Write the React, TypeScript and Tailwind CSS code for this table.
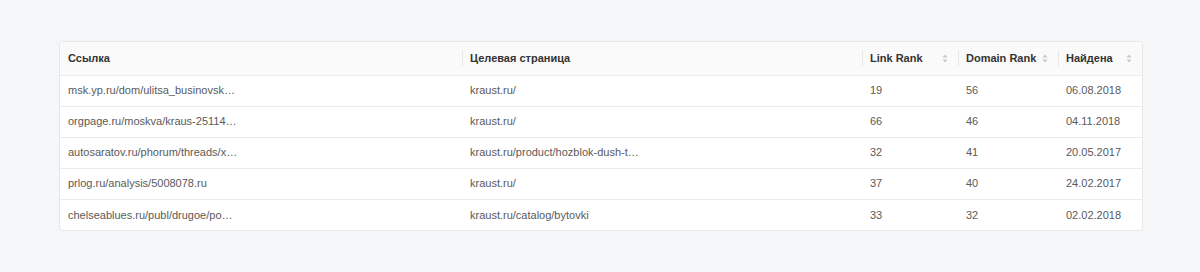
const ROWS = [
  { link: "msk.yp.ru/dom/ulitsa_businovsk…", target: "kraust.ru/", linkRank: 19, domainRank: 56, found: "06.08.2018" },
  { link: "orgpage.ru/moskva/kraus-25114…", target: "kraust.ru/", linkRank: 66, domainRank: 46, found: "04.11.2018" },
  { link: "autosaratov.ru/phorum/threads/x…", target: "kraust.ru/product/hozblok-dush-t…", linkRank: 32, domainRank: 41, found: "20.05.2017" },
  { link: "prlog.ru/analysis/5008078.ru", target: "kraust.ru/", linkRank: 37, domainRank: 40, found: "24.02.2017" },
  { link: "chelseablues.ru/publ/drugoe/po…", target: "kraust.ru/catalog/bytovki", linkRank: 33, domainRank: 32, found: "02.02.2018" },
];

function SortIcon() {
  return (
    <svg width="6" height="9" viewBox="0 0 6 9" className="shrink-0">
      <path d="M3 0.5 L5.5 3.5 H0.5 Z" fill="#c8c8c8" />
      <path d="M3 8.5 L5.5 5.5 H0.5 Z" fill="#c8c8c8" />
    </svg>
  );
}

function HeaderCell({ label, sortable, divider }: { label: string; sortable?: boolean; divider?: boolean }) {
  return (
    <th className="relative h-[33px] px-2 text-left font-bold text-[#333]">
      {divider && <span className="absolute left-0 top-1/2 h-[16px] w-px -translate-y-1/2 bg-[#e8e8e8]" />}
      <div className="flex items-center justify-between pr-0.5">
        <span>{label}</span>
        {sortable && <SortIcon />}
      </div>
    </th>
  );
}

export default function App() {
  return (
    <div className="min-h-[272px] bg-[#f5f6f8] pl-[59px] pr-[57px] pt-[41px] font-['Liberation_Sans',Arial,sans-serif] text-[11px]">
      <div className="overflow-hidden rounded-[4px] border border-[#e8e8e8] bg-white">
        <table className="w-full table-fixed border-collapse">
          <colgroup>
            <col className="w-[402px]" />
            <col className="w-[400px]" />
            <col className="w-[96px]" />
            <col className="w-[100px]" />
            <col />
          </colgroup>
          <thead className="bg-[#fafafa]">
            <tr className="border-b border-[#ebebeb]">
              <HeaderCell label="Ссылка" />
              <HeaderCell label="Целевая страница" divider />
              <HeaderCell label="Link Rank" sortable divider />
              <HeaderCell label="Domain Rank" sortable divider />
              <HeaderCell label="Найдена" sortable divider />
            </tr>
          </thead>
          <tbody className="text-[#5a5a5a]">
            {ROWS.map((r, i) => (
              <tr key={i} className={i < ROWS.length - 1 ? "border-b border-[#ebebeb]" : ""}>
                <td className="h-[31px] truncate px-2">{r.link}</td>
                <td className="truncate px-2">{r.target}</td>
                <td className="px-2">{r.linkRank}</td>
                <td className="px-2">{r.domainRank}</td>
                <td className="px-2">{r.found}</td>
              </tr>
            ))}
          </tbody>
        </table>
      </div>
    </div>
  );
}
